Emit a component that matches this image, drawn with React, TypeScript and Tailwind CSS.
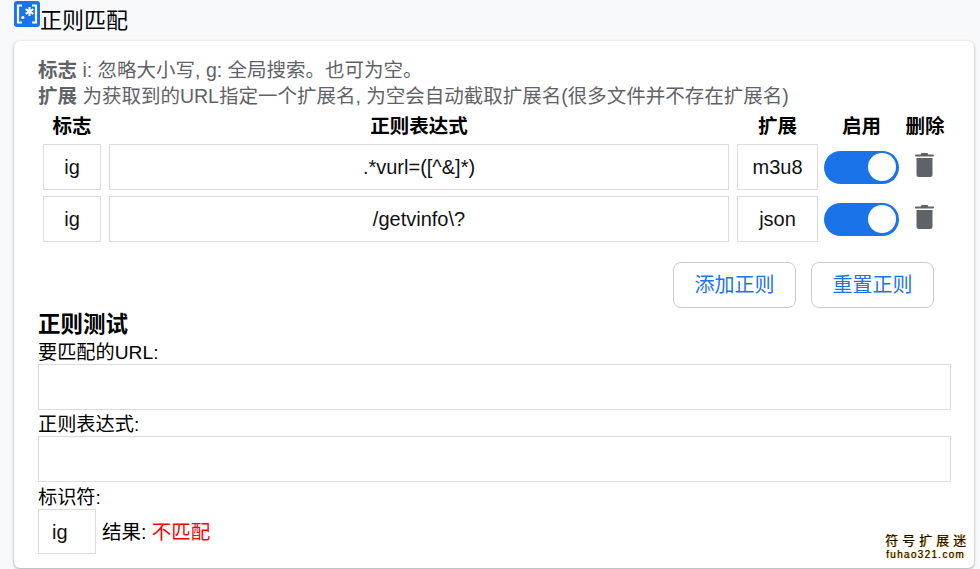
import React from 'react';

const font = { fontFamily: '"Liberation Sans", "Noto Sans CJK SC", sans-serif' };

const Cell = ({ children, className = '' }: { children?: React.ReactNode; className?: string }) => (
  <div className={`h-[46px] border border-[#dcdcdc] bg-white flex items-center justify-center text-[20px] text-[#111] ${className}`}>
    {children}
  </div>
);

const Toggle = () => (
  <div className="w-[75px] h-[33px] rounded-full bg-[#1a73e8] flex items-center justify-end pr-[3px]">
    <div className="w-[28px] h-[28px] rounded-full bg-white" />
  </div>
);

const Trash = () => (
  <svg width="19" height="24" viewBox="0 0 19 24" className="ml-[16px] mb-[5px]">
    <path d="M6.500 0h6l.8 1.500h4.700a.9.9 0 0 1 0 2H1a.9.9 0 0 1 0-2h4.700z" fill="#5f6368" />
    <path d="M1.500 5h16v16.800a2.200 2.200 0 0 1-2.200 2.200H3.700a2.200 2.200 0 0 1-2.200-2.200z" fill="#5f6368" />
  </svg>
);

const Row = ({ flag, regex, ext }: { flag: string; regex: string; ext: string }) => (
  <div className="flex items-center h-[46px]">
    <Cell className="w-[58px]">{flag}</Cell>
    <Cell className="w-[620px] ml-[8px]">{regex}</Cell>
    <Cell className="w-[81px] ml-[8px]">{ext}</Cell>
    <div className="ml-[6px]"><Toggle /></div>
    <Trash />
  </div>
);

const Btn = ({ children }: { children: React.ReactNode }) => (
  <button className="w-[123px] h-[46px] rounded-[8px] border border-[#cccccc] bg-white text-[20px] text-[#1a73e8]">
    {children}
  </button>
);

export default function App() {
  return (
    <div className="w-[980px] h-[569px] overflow-hidden bg-[#f8f9fb] relative" style={font}>
      {/* title */}
      <div className="h-[41px] pl-[14px] flex items-start">
        <svg width="26" height="26" viewBox="0 0 26 26" className="mt-[1px] shrink-0">
          <rect width="26" height="26" rx="3" fill="#1a73e8" />
          <path d="M8 4.500H4v17h4M18 4.500h4v17h-4" fill="none" stroke="#fff" strokeWidth="2.200" />
          <circle cx="8.800" cy="16.500" r="1.600" fill="#fff" />
          <path d="M15.500 6v9M11.600 8.200l7.800 4.600M19.400 8.200l-7.800 4.600" stroke="#fff" strokeWidth="2" />
        </svg>
        <h1 className="text-[22px] leading-[26px] mt-[8px] text-black font-normal">正则匹配</h1>
      </div>

      {/* card */}
      <div className="ml-[14px] w-[960px] h-[527px] bg-white rounded-[6px] shadow-[0_1px_3px_rgba(0,0,0,0.35)] pl-[24px] pr-[23px] pt-[16px]">
        <div className="text-[19.500px] leading-[26px] text-[#5f6368]">
          <div><b>标志</b> i: 忽略大小写, g: 全局搜索。也可为空。</div>
          <div><b>扩展</b> 为获取到的URL指定一个扩展名, 为空会自动截取扩展名(很多文件并不存在扩展名)</div>
        </div>

        <div className="pl-[5px]">
          <div className="flex h-[35px] items-center text-[19.500px] font-bold text-black">
            <div className="w-[58px] text-center">标志</div>
            <div className="w-[620px] ml-[8px] text-center">正则表达式</div>
            <div className="w-[81px] ml-[8px] text-center">扩展</div>
            <div className="w-[75px] ml-[6px] text-center">启用</div>
            <div className="w-[40px] ml-[6px] text-center">删除</div>
          </div>
          <div className="flex flex-col gap-[6px]">
            <Row flag="ig" regex=".*vurl=([^&]*)" ext="m3u8" />
            <Row flag="ig" regex="/getvinfo\?" ext="json" />
          </div>
        </div>

        <div className="flex justify-end gap-[15px] mt-[20px] pr-[17px]">
          <Btn>添加正则</Btn>
          <Btn>重置正则</Btn>
        </div>

        <h2 className="text-[22.500px] leading-[26px] font-bold text-black mt-[4px]">正则测试</h2>
        <div className="h-[24px] flex items-end text-[19.200px] leading-[22px] text-black mt-[2px]">要匹配的URL:</div>
        <div className="h-[46px] border border-[#dcdcdc]" />
        <div className="h-[26px] flex items-end text-[19.200px] leading-[22px] text-black">正则表达式:</div>
        <div className="h-[46px] border border-[#dcdcdc]" />
        <div className="h-[27px] flex items-end text-[19.200px] leading-[23px] text-black">标识符:</div>
        <div className="flex items-center text-[19.500px] text-black">
          <Cell className="w-[58px] !h-[45px] !justify-start pl-[13px]">ig</Cell>
          <span className="ml-[6px] pt-[2px]">结果: <span className="text-[#ff0000]">不匹配</span></span>
        </div>
      </div>

      {/* watermark */}
      <div className="absolute right-[14px] bottom-[8px] text-center text-black font-normal [text-shadow:1px_0_0_#f0a800]">
        <div className="text-[13px] leading-[16px] tracking-[4px] -mr-[4px]">符号扩展迷</div>
        <div className="text-[10px] leading-[12px] tracking-[1.300px]">fuhao321.com</div>
      </div>
    </div>
  );
}
